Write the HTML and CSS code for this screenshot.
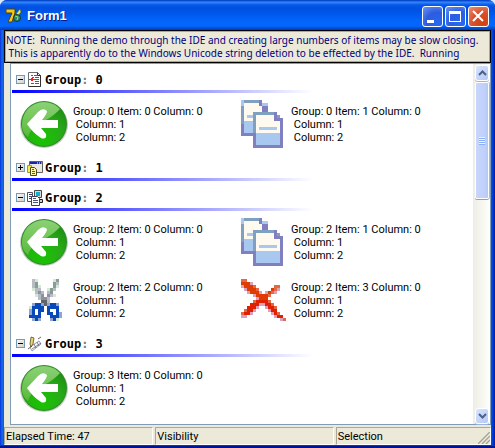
FILE: index.html
```html
<!DOCTYPE html>
<html lang="en">
<head>
<meta charset="utf-8">
<title>Form1</title>
<link rel="stylesheet" href="styles.css">
</head>
<body>
<svg class="defs" aria-hidden="true">
  <defs>
    <radialGradient id="ball" cx="0.45" cy="0.85" r="0.9">
      <stop offset="0" stop-color="#18c400"/>
      <stop offset="0.5" stop-color="#28ac18"/>
      <stop offset="1" stop-color="#1c8814"/>
    </radialGradient>
    <linearGradient id="gloss" x1="0" y1="0" x2="0" y2="1">
      <stop offset="0" stop-color="#a0dc88"/>
      <stop offset="1" stop-color="#60bc40"/>
    </linearGradient>
    <symbol id="arrow" viewBox="0 0 48 48">
      <ellipse cx="24" cy="25" rx="24" ry="23" fill="#c4ccc0"/>
      <circle cx="24" cy="24" r="23" fill="#2c8c24"/>
      <circle cx="24" cy="24" r="22" fill="url(#ball)"/>
      <path d="M2 26A22 22 0 0 1 40 9C33 17 24 21 17 25C12 28 9 33 8 37Q2 32 2 26Z" fill="url(#gloss)" opacity=".85"/>
      <path d="M7 24L18 12Q23 7 27 11Q27 14 22 20H38V28H21L26 34Q27 40 21 38Q13 33 7 24Z" fill="#fff"/>
    </symbol>
    <symbol id="docs" viewBox="0 0 16 16">
      <path fill="#fffaf0" d="M2 1h7v10H2z"/>
      <path fill="#a8c8f0" d="M3 5h3v1H3zM2 7h4v4H2zM8 1h2v1H8zM1 0h1v2H1z"/>
      <path fill="#80a0c0" d="M2 0h5v1H2zM1 2h1v6H1z"/>
      <path fill="#8080c0" d="M7 0h1v2H7zM8 2h2v2H8zM1 8h1v3h3v1H1z"/>
      <path fill="#a8c8f0" d="M6 5h8v10H6z"/>
      <path fill="#fffaf0" d="M6 5h6v2h2v4H6z"/>
      <path fill="#a8c8f0" d="M7 9h6v1H7z"/>
      <path fill="#80a0c0" d="M5 4h7v1H6v6H5zM13 5h1v1h-1z"/>
      <path fill="#8080c0" d="M12 4h1v2h2v10H5v-5h1v4h8V7h-2z"/>
    </symbol>
    <symbol id="delete" viewBox="0 0 16 16">
      <path stroke="#dca0bc" d="M4 2.500h1M1 3.500h1M2 4.500h1M13 4.500h1M3 5.500h1M7 5.500h1M9 5.500h1M12 5.500h1M5 6.500h1M6 7.500h1M7 9.500h2M6 10.500h1M9 10.500h1M5 11.500h1M10 11.500h1M4 12.500h1M11 12.500h1M1 13.500h2M12 13.500h1M14 14.500h1"/>
      <path stroke="#e46844" d="M1 1.500h2M5 3.500h1M12 3.500h2M6 4.500h1M12 4.500h1M11 5.500h1M10 6.500h1M10 8.500h1M5 8.500h1M11 9.500h1M12 10.500h1M2 11.500h1M1 12.500h1M13 12.500h1M15 14.500h1"/>
      <path stroke="#e03c00" d="M1 2.500h3M2 3.500h3M3 4.500h3M11 4.500h1M4 5.500h3M10 5.500h1M6 6.500h4M7 7.500h3"/>
      <path stroke="#e02000" d="M6 8.500h4M4 9.500h3M9 9.500h2M3 10.500h3M10 10.500h2M3 11.500h2M11 11.500h2M2 12.500h2M12 12.500h1M13 13.500h2"/>
    </symbol>
    <symbol id="scissors" viewBox="0 0 16 16">
      <path stroke="#d4e8d4" d="M5 1.500h1M11 1.500h1M6 3.500h1M12 3.500h1M4 4.500h1M9 4.500h1M5 6.500h1M11 6.500h1M3 10.500h1M12 14.500h1"/>
      <path stroke="#b8bcc4" d="M4 1.500h1M4 2.500h1M12 2.500h1M4 3.500h1M5 4.500h2M11 4.500h1M5 5.500h1M7 5.500h1M9 5.500h1M6 6.500h1M10 6.500h1M6 7.500h1M9 7.500h1M9 8.500h1"/>
      <path stroke="#84a090" d="M12 1.500h1M5 2.500h1M11 2.500h1M5 3.500h1M11 3.500h1M10 4.500h1"/>
      <path stroke="#9090a4" d="M6 5.500h1M10 5.500h1M7 6.500h1M9 6.500h1M7 7.500h2"/>
      <path stroke="#606468" d="M7 8.500h2M8 9.500h1"/>
      <path stroke="#90a4d0" d="M4 9.500h1M7 9.500h1M9 9.500h1M12 9.500h1M3 11.500h1M3 12.500h1M13 12.500h1M4 14.500h1M6 14.500h1M10 14.500h1M13 13.500h1"/>
      <path stroke="#0848b8" d="M5 9.500h2M10 9.500h2M4 10.500h4M9 10.500h4M4 11.500h1M6 11.500h2M9 11.500h1M12 11.500h1M4 12.500h1M6 12.500h1M9 12.500h2M12 12.500h1M3 13.500h4M10 13.500h3M5 14.500h1M11 14.500h1"/>
    </symbol>
  </defs>
</svg>

<div class="window">
  <header class="titlebar">
    <svg class="app-icon" viewBox="0 0 16 16" aria-hidden="true">
      <path d="M0 1h9v4L6 14H2l4-9H0z" fill="#f0c820" stroke="#504008"/>
      <path d="M10 6l4-5 1 3-3 4z" fill="#f0e848" stroke="#406810" stroke-width=".6"/>
      <circle cx="11" cy="10" r="3.500" fill="#2c8868" stroke="#103830"/>
      <path d="M9 8l3 1-1 3" fill="none" stroke="#90e080"/>
    </svg>
    <h1 class="caption">Form1</h1>
    <div class="window-buttons">
      <button class="win-btn" aria-label="Minimize"><svg viewBox="0 0 21 21"><path d="M5 14h7v3H5z" fill="#fff"/></svg></button>
      <button class="win-btn" aria-label="Maximize"><svg viewBox="0 0 21 21"><path d="M4 5h12v11H4zM5 8v7h10V8z" fill="#fff" fill-rule="evenodd"/></svg></button>
      <button class="win-btn close" aria-label="Close"><svg viewBox="0 0 21 21"><path d="M5 5L15 15M15 5L5 15" stroke="#fff" stroke-width="2"/></svg></button>
    </div>
  </header>

  <main class="client">
    <p class="note">NOTE:  Running the demo through the IDE and creating large numbers of items may be slow closing.
 This is apparently do to the Windows Unicode string deletion to be effected by the IDE.  Running</p>

    <div class="list">
      <div class="groups">
        <section class="group">
          <header class="group-header">
            <button class="toggle" aria-label="Collapse group 0"><svg viewBox="0 0 9 9"><path d="M2 4h5v1H2z"/></svg></button>
            <svg class="group-icon" viewBox="0 0 16 16">
              <path d="M1.500 .5h9l3 3v11h-12z" fill="#fff" stroke="#707070"/>
              <path d="M10.500 .5v3h3v11h-12" fill="none" stroke="#303030"/>
              <path d="M4 3.500h2M7 3.500h3M5 5.500h2M8 5.500h4M8 9.500h4M4 11.500h3M8 11.500h4" stroke="#307070"/>
              <path d="M2 7.500h10M4 6.500h2M4 8.500h2" stroke="#f02020"/>
            </svg>
            <h2 class="group-title">Group<i>:</i> 0</h2>
          </header>
          <ul class="items">
            <li class="item"><svg class="pic"><use href="#arrow"/></svg><p class="label">Group: 0 Item: 0 Column: 0
 Column: 1
 Column: 2</p></li>
            <li class="item"><svg class="pic"><use href="#docs"/></svg><p class="label">Group: 0 Item: 1 Column: 0
 Column: 1
 Column: 2</p></li>
          </ul>
        </section>

        <section class="group">
          <header class="group-header">
            <button class="toggle" aria-label="Expand group 1"><svg viewBox="0 0 9 9"><path d="M2 4h2V2h1v2h2v1H5v2H4V5H2z"/></svg></button>
            <svg class="group-icon" viewBox="0 0 16 16">
              <path d="M2.500 1.500h13v11h-13z" fill="#e8e8e4" stroke="#606060"/>
              <path d="M3 2h12v2H3z" fill="#1828a0"/>
              <path d="M10 3h1M12 3h1M14 3h1" stroke="#fff"/>
              <path d="M.5 5.500h4v7h-4z" fill="#f8f040" stroke="#a09828"/>
              <path d="M3.500 7.500h4l2 2v6h-6z" fill="#fff8a0" stroke="#484820"/>
              <path d="M5 9.500h2M5 11.500h3M5 13.500h3" stroke="#606030"/>
            </svg>
            <h2 class="group-title">Group<i>:</i> 1</h2>
          </header>
        </section>

        <section class="group">
          <header class="group-header">
            <button class="toggle" aria-label="Collapse group 2"><svg viewBox="0 0 9 9"><path d="M2 4h5v1H2z"/></svg></button>
            <svg class="group-icon" viewBox="0 0 16 16">
              <path d="M7.500 .5h7v7h-7z" fill="#d8d8d8" stroke="#484848"/>
              <path d="M9 2h4v4H9z" fill="#10b0c8"/>
              <path d="M6 9.500h9.500v3H6z" fill="#d0d0d0" stroke="#202020"/>
              <path d="M.5 2.500h5v9h-5z" fill="#fff" stroke="#505068"/>
              <path d="M2 4.500h3M2 6.500h3M2 8.500h2" stroke="#404060"/>
              <path d="M4.500 6.500h6l2 2v7h-8z" fill="#fff" stroke="#404058"/>
              <path d="M6 8.500h3M6 10.500h5M6 12.500h5" stroke="#505070"/>
            </svg>
            <h2 class="group-title">Group<i>:</i> 2</h2>
          </header>
          <ul class="items">
            <li class="item"><svg class="pic"><use href="#arrow"/></svg><p class="label">Group: 2 Item: 0 Column: 0
 Column: 1
 Column: 2</p></li>
            <li class="item"><svg class="pic"><use href="#docs"/></svg><p class="label">Group: 2 Item: 1 Column: 0
 Column: 1
 Column: 2</p></li>
            <li class="item"><svg class="pic"><use href="#scissors"/></svg><p class="label">Group: 2 Item: 2 Column: 0
 Column: 1
 Column: 2</p></li>
            <li class="item"><svg class="pic"><use href="#delete"/></svg><p class="label">Group: 2 Item: 3 Column: 0
 Column: 1
 Column: 2</p></li>
          </ul>
        </section>

        <section class="group">
          <header class="group-header">
            <button class="toggle" aria-label="Collapse group 3"><svg viewBox="0 0 9 9"><path d="M2 4h5v1H2z"/></svg></button>
            <svg class="group-icon" viewBox="0 0 16 16">
              <path d="M3 11l9-6 2 3-9 7z" fill="#fff" stroke="#8080a0" stroke-width=".8"/>
              <path d="M5 13l9-6M7 8l2 4M10 6l2 4" stroke="#606078" stroke-width=".8"/>
              <path d="M4 1l3 1-1 6-2 3-1-3z" fill="#e8d470" stroke="#605020" stroke-width=".8"/>
              <path d="M1 13l4-3M11 3l3-2" stroke="#404040" stroke-width=".8"/>
            </svg>
            <h2 class="group-title">Group<i>:</i> 3</h2>
          </header>
          <ul class="items">
            <li class="item"><svg class="pic"><use href="#arrow"/></svg><p class="label">Group: 3 Item: 0 Column: 0
 Column: 1
 Column: 2</p></li>
          </ul>
        </section>
      </div>

      <div class="scrollbar">
        <button class="scroll-btn" aria-label="Scroll up"><svg viewBox="0 0 9 6"><path d="M1 5L4.500 1.500L8 5"/></svg></button>
        <div class="track"><div class="thumb"><span class="grip"></span></div></div>
        <button class="scroll-btn" aria-label="Scroll down"><svg viewBox="0 0 9 6"><path d="M1 1L4.500 4.500L8 1"/></svg></button>
      </div>
    </div>

    <footer class="statusbar">
      <span class="panel">Elapsed Time: 47</span>
      <span class="panel">Visibility</span>
      <span class="panel last">Selection
        <svg class="sizer" viewBox="0 0 12 12"><path d="M1 12L12 1M5 12L12 5M9 12L12 9" stroke="#fff"/><path d="M0 12L12 0M4 12L12 4M8 12L12 8" stroke="#a8a490" stroke-width="1.500"/></svg>
      </span>
    </footer>
  </main>
</div>
</body>
</html>
```
FILE: styles.css
```css
* {
  box-sizing: border-box;
}

body {
  margin: 0;
  background: #dce8f8;
  color: #000;
  font: 11px/13px Roboto, sans-serif;
}

h1, h2, p, ul {
  margin: 0;
  padding: 0;
}

button {
  margin: 0;
  padding: 0;
  font: inherit;
}

svg {
  display: block;
}

.defs {
  position: absolute;
  width: 0;
  height: 0;
}

.window {
  display: flex;
  flex-direction: column;
  min-height: 100vh;
  padding: 0 4px 3px;
  border-radius: 7px 7px 0 0;
  background: linear-gradient(90deg, #0831d9 0, #166aee 2px, #0855dd 4px, #0855dd calc(100% - 4px), #0048e8 calc(100% - 3px), #001ca0 100%);
  box-shadow: inset 0 -2px #001490, inset 0 -3px #0831d9;
}

.titlebar {
  display: flex;
  align-items: center;
  height: 30px;
  margin: 0 -4px;
  padding: 2px 6px 0;
  border-radius: 7px 7px 0 0;
  background: linear-gradient(#0848c8 0, #0848d0 1px, #3c8cff 2px, #2478f8 3px, #0458e8 5px, #0050e0 8px, #0058ec 14px, #0464fc 21px, #0468fc 26px, #0050d8 28px, #003cc0 30px);
}

.app-icon {
  width: 16px;
  height: 16px;
}

.caption {
  flex: 1;
  margin-left: 5px;
  color: #fff;
  font: bold 13px/18px "Liberation Sans", sans-serif;
  text-shadow: 1px 1px #0a1883;
}

.window-buttons {
  display: flex;
  gap: 2px;
}

.win-btn {
  width: 21px;
  height: 21px;
  border: 1px solid #fff;
  border-radius: 3px;
  background: radial-gradient(circle at 75% 85%, #2868f0, #2c5ce0 50%, #6c94f0);
}

.win-btn svg {
  width: 21px;
  height: 21px;
  margin: -1px;
}

.win-btn.close {
  background: radial-gradient(circle at 75% 85%, #d04010, #d85030 50%, #ec9070);
}

.client {
  flex: 1;
  display: flex;
  flex-direction: column;
  background: #ece9d8;
}

.note {
  height: 33px;
  padding: 3px 1px;
  border: 1px solid #000;
  box-shadow: inset 1px 1px #aca899, inset -1px -1px #aca899;
  color: #000080;
  font: 10px/13px "Noto Sans", sans-serif;
  white-space: pre;
}

.list {
  flex: 1;
  display: flex;
  margin: 0 0 0 6px;
  border: 1px solid #7f9db9;
  background: #fff;
}

.groups {
  flex: 1;
}

.group-header {
  display: flex;
  align-items: center;
  height: 30px;
  padding: 4px 0 3px 5px;
  background: linear-gradient(90deg, #0000ff, #fff) 1px 26px / 301px 3px no-repeat;
}

.toggle {
  width: 9px;
  height: 9px;
  outline: 1px solid #7898b5;
  outline-offset: -1px;
  border: 0;
  background: linear-gradient(135deg, #fff, #d0ccc0);
}

.toggle svg {
  width: 9px;
  height: 9px;
}

.group-icon {
  width: 16px;
  height: 16px;
  margin: 0 2px;
}

.group-title {
  font: bold 12px/16px "DejaVu Sans Mono", monospace;
  white-space: pre;
}

.group-title i {
  font-style: normal;
  color: #808080;
}

.items {
  display: grid;
  grid-template-columns: repeat(auto-fill, 218px);
  padding-left: 9px;
  list-style: none;
}

.item {
  display: flex;
  gap: 5px;
  height: 58px;
  padding-top: 6px;
}

.pic {
  width: 48px;
  height: 48px;
  fill: none;
}

.label {
  padding-top: 5px;
  white-space: pre;
}

.scrollbar {
  display: flex;
  flex-direction: column;
  width: 17px;
  padding: 1px 1px 0 2px;
  background: linear-gradient(90deg, #eeede5, #fefefb);
}

.scroll-btn {
  display: grid;
  place-items: center;
  height: 16px;
  border: 1px solid #fff;
  border-radius: 3px;
  background: linear-gradient(135deg, #d8e4ff, #b4c8f8);
  box-shadow: 0 1px #a0b4d8;
}

.scroll-btn svg {
  width: 9px;
  height: 6px;
  fill: none;
  stroke: #4d6185;
  stroke-width: 2;
}

.track {
  flex: 1;
  padding-top: 1px;
}

.thumb {
  display: grid;
  place-items: center;
  height: 36%;
  border: 1px solid #fff;
  border-radius: 2px;
  background: linear-gradient(90deg, #c8d6fb, #c0d0fc 70%, #b4c8f4);
  box-shadow: 0 1px #88a0c8, 1px 0 #a8b8d8;
}

.grip {
  width: 6px;
  height: 8px;
  background: repeating-linear-gradient(#eef4fe 0 1px, #8cb0f8 1px 2px);
}

.statusbar {
  display: grid;
  grid-template-columns: 149fr 178fr 155fr;
  gap: 2px;
  padding: 2px 0 0;
}

.panel {
  height: 18px;
  padding: 2px 0 0 1px;
  border: 1px solid;
  border-color: #aca899 #fff #fff #aca899;
}

.last {
  display: flex;
  justify-content: space-between;
}

.sizer {
  width: 12px;
  height: 12px;
  margin-top: 2px;
}
```
